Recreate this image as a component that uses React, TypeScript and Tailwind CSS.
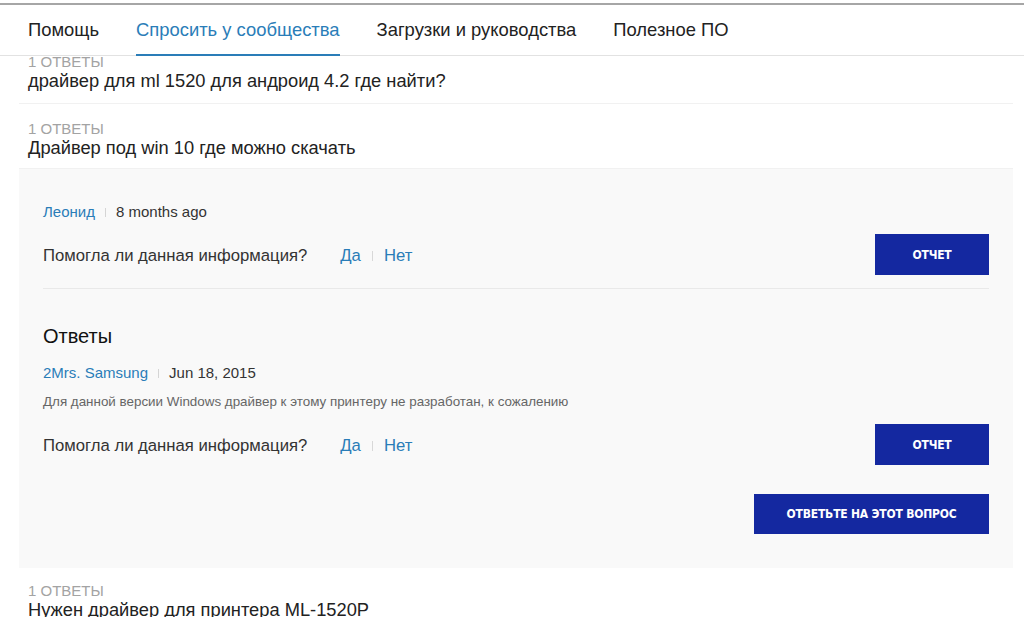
const tabs = ["Помощь", "Спросить у сообщества", "Загрузки и руководства", "Полезное ПО"];

function QuestionItem({ count, title, className }: { count: string; title: string; className: string }) {
  return (
    <div className={`${className} pl-[9px] border-b border-[#f1f1f1]`}>
      <div className="text-[15px] leading-[17px] text-[#a3a3a3]">{count}</div>
      <div className="text-[18.3px] leading-[22px] text-[#222]">{title}</div>
    </div>
  );
}

function Feedback() {
  return (
    <div className="flex items-center justify-between h-[41px]">
      <div className="flex items-center pt-[3px] text-[16.7px] text-[#333]">
        <span>Помогла ли данная информация?</span>
        <a className="ml-[33px] text-[#2a7db8]">Да</a>
        <span className="mx-[11px] w-px h-[10px] bg-[#d8d8d8]"></span>
        <a className="text-[#2a7db8]">Нет</a>
      </div>
      <ReportButton label="ОТЧЕТ" width="w-[114px]" height="h-[41px]" />
    </div>
  );
}

function ReportButton({ label, width, height }: { label: string; width: string; height: string }) {
  return (
    <button
      className={`${width} ${height} bg-[#1428a0] text-white text-[12px] font-bold tracking-[-0.2px] font-['DejaVu_Sans_Condensed',sans-serif]`}
    >
      {label}
    </button>
  );
}

function Meta({ name, date }: { name: string; date: string }) {
  return (
    <div className="flex items-center h-[20px] text-[15px]">
      <span className="text-[#2a7db8]">{name}</span>
      <span className="mx-[10px] w-px h-[9px] bg-[#d5d5d5]"></span>
      <span className="text-[#333]">{date}</span>
    </div>
  );
}

export default function App() {
  return (
    <div className="w-[1024px] h-[617px] overflow-hidden bg-white font-['Liberation_Sans',Arial,sans-serif] pt-[3px]">
      <div className="relative z-10 bg-white h-[53px] border-t-2 border-[#a6a6a6] border-b border-b-[#e2e2e2] flex items-stretch pl-[28px]">
        {tabs.map((t, i) => (
          <div
            key={t}
            className={`flex items-center mr-[37px] text-[18.4px] border-b-2 -mb-px ${
              i === 1 ? "text-[#2a7db8] border-[#2a7db8]" : "text-[#222] border-transparent"
            }`}
          >
            {t}
          </div>
        ))}
      </div>

      <div className="ml-[19px] mr-[11px]">
        <QuestionItem
          className="-mt-[17px] pt-[14px] pb-[11px]"
          count="1 ОТВЕТЫ"
          title="драйвер для ml 1520 для андроид 4.2 где найти?"
        />
        <QuestionItem
          className="pt-[16px] pb-[9px]"
          count="1 ОТВЕТЫ"
          title="Драйвер под win 10 где можно скачать"
        />

        <div className="bg-[#f9f9f9] px-[24px] pt-[33px] pb-[34px]">
          <Meta name="Леонид" date="8 months ago" />
          <div className="mt-[12px]">
            <Feedback />
          </div>
          <div className="mt-[13px] border-t border-[#e9e9e9]"></div>

          <h3 className="mt-[35px] text-[20px] leading-[24px] text-[#111]">Ответы</h3>
          <div className="mt-[15px]">
            <Meta name="2Mrs. Samsung" date="Jun 18, 2015" />
          </div>
          <p className="mt-[10px] text-[13.4px] leading-[18px] text-[#666]">
            Для данной версии Windows драйвер к этому принтеру не разработан, к сожалению
          </p>
          <div className="mt-[13px]">
            <Feedback />
          </div>
          <div className="mt-[29px] flex justify-end">
            <ReportButton label="ОТВЕТЬТЕ НА ЭТОТ ВОПРОС" width="w-[235px]" height="h-[40px]" />
          </div>
        </div>

        <QuestionItem
          className="pt-[14px] pb-[9px]"
          count="1 ОТВЕТЫ"
          title="Нужен драйвер для принтера ML-1520P"
        />
      </div>
    </div>
  );
}
